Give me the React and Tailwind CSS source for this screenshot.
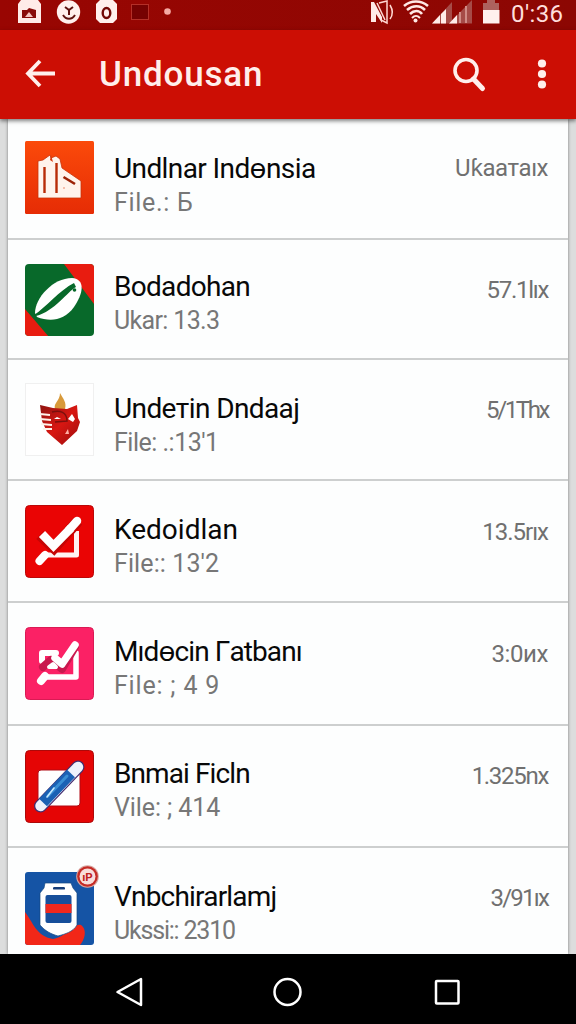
const BuildingIcon = () => (
    <svg viewBox="0 0 69 73" className="h-full w-full">
        <defs>
            <linearGradient id="orange" x1="0" y1="0" x2="0" y2="1">
                <stop offset="0" stopColor="#fb4a0a" />
                <stop offset="1" stopColor="#e62c05" />
            </linearGradient>
        </defs>
        <rect width="69" height="73" rx="1.5" fill="url(#orange)" />
        <path
            d="M13 57 V20 L18 19 L25 14 L26 17 L31 15 L35 18 L37 27 L56 40 V57 Z"
            fill="#fff3ec"
            stroke="#c93208"
            strokeWidth="0.8"
            strokeLinejoin="round"
        />
        <path d="M19.5 26 V52 M31.5 22 V52" stroke="#b82a06" strokeWidth="2.4" />
        <path d="M26 14 L28 21 L25 19 Z" fill="#d8370a" />
        <path d="M38.5 36 L50 43" stroke="#9c2206" strokeWidth="2.6" />
        <circle cx="39" cy="47" r="0.9" fill="#f2a58c" />
    </svg>
);

const LeafIcon = () => (
    <svg viewBox="0 0 69 73" className="h-full w-full">
        <defs>
            <clipPath id="leafClip">
                <rect width="69" height="72" rx="4" />
            </clipPath>
        </defs>
        <g clipPath="url(#leafClip)">
            <rect width="69" height="73" fill="#08692a" />
            <path d="M39 0 H69 V40 Z" fill="#e81c10" />
            <path d="M0 45 L24 73 H0 Z" fill="#e81c10" />
            <path
                d="M10 49 C10 34 28 14 47 14 C61 15 58 30 49 43 C39 57 25 58 12 53 Z"
                fill="#fff"
            />
            <path d="M9 51 C20 44 35 26 49 19 L51 23 C42 28 30 47 11 52 Z" fill="#08692a" />
            <circle cx="49.5" cy="26" r="1.8" fill="#08692a" />
        </g>
    </svg>
);

const HeartIcon = () => (
    <svg viewBox="0 0 69 73" className="h-full w-full">
        <defs>
            <linearGradient id="heart" x1="0" y1="0" x2="1" y2="1">
                <stop offset="0" stopColor="#8f1410" />
                <stop offset="0.5" stopColor="#d81712" />
                <stop offset="1" stopColor="#9b0d0d" />
            </linearGradient>
        </defs>
        <rect x="0.5" y="0.5" width="68" height="72" fill="#fff" stroke="#f0f0f0" />
        <path d="M35 10 C38 16 42 19 40 26 H30 C28 20 35 18 35 10 Z" fill="#d89a3b" />
        <path
            d="M15 22 L28 25 L42 26 L52 22 L53 35 L55 39 L52 48 L37 62 L22 49 L17 38 Z"
            fill="url(#heart)"
        />
        <path
            d="M15 31 L25 32 M15 36 L26 37 M16 41 L27 42 M18 46 L27 46"
            stroke="#fff2ea"
            strokeWidth="1.9"
        />
        <path d="M29 36 L32 34 L36 36 H29 Z" fill="#fff" />
        <path d="M43 36 L47 31 L50 36 L48 39 Z" fill="#fff" />
        <path d="M27 29 C35 27 42 29 42 38 L30 39" stroke="#7b100d" strokeWidth="1.5" fill="none" />
        <path d="M40 51 L43 46 L44 51 Z" fill="#ffb0a6" />
    </svg>
);

const CheckIcon = () => (
    <svg viewBox="0 0 69 73" className="h-full w-full">
        <rect x="0.5" y="0.5" width="68" height="72" rx="4" fill="#ea0404" stroke="#bb0808" />
        <g fill="none" stroke="#fff" strokeLinejoin="round">
            <path d="M15 55 L20 50 H51.5 V26" stroke="#fff3f3" strokeWidth="5" />
            <path d="M14.5 56 L20 50" strokeWidth="8" strokeLinecap="round" />
            <path
                d="M15 30 L29 43 L53 16"
                stroke="#c60505"
                strokeWidth="11"
                strokeLinejoin="miter"
            />
            <path d="M17 29 L28.5 41 L46 23" strokeWidth="8.5" strokeLinejoin="miter" />
            <path d="M44 25 L52 16" strokeWidth="8.5" strokeLinecap="round" />
        </g>
    </svg>
);

const ChartIcon = () => (
    <svg viewBox="0 0 69 73" className="h-full w-full">
        <rect x="0.5" y="0.5" width="68" height="72" rx="4" fill="#fb2165" stroke="#d91b54" />
        <g fill="none" stroke="#fff" strokeLinejoin="round" strokeLinecap="round">
            <path d="M16 54 L21 50 H51 V26" strokeWidth="5.5" />
            <path d="M16 54 L20 49" strokeWidth="8" />
            <path d="M17 34 V26 H31" strokeWidth="6" />
            <path d="M18 40 L26 33 L37 42 L50 20" stroke="#c9184e" strokeWidth="8" />
            <path d="M30 31 L37 37 L50 18" strokeWidth="7.5" />
            <path d="M24 40 L28 37 L31 40 Z" strokeWidth="4" fill="#fff" />
        </g>
    </svg>
);

const PencilIcon = () => (
    <svg viewBox="0 0 69 73" className="h-full w-full">
        <rect x="0.5" y="0.5" width="68" height="72" rx="4" fill="#e50505" stroke="#ad0909" />
        <rect x="13" y="20" width="42" height="36" rx="3" fill="#fff" stroke="#b20b14" />
        <g fill="none" strokeLinecap="round">
            <path d="M15.5 56 L53 17" stroke="#432e70" strokeWidth="13" />
            <path d="M15.5 56 L53 17" stroke="#eef2fc" strokeWidth="10.5" />
            <path d="M18 52.5 L46 23.5" stroke="#1b61b4" strokeWidth="11" strokeLinecap="butt" />
            <path d="M23 46 L42 26" stroke="#3a8ed4" strokeWidth="3" />
            <path d="M22 47 L29 38" stroke="#c8eaff" strokeWidth="1.6" />
        </g>
    </svg>
);

const PhoneIcon = () => (
    <svg viewBox="0 0 69 73" className="h-full w-full overflow-visible">
        <defs>
            <clipPath id="phoneClip">
                <rect width="69" height="73" rx="3" />
            </clipPath>
        </defs>
        <g clipPath="url(#phoneClip)">
            <rect width="69" height="73" fill="#1554a5" />
            <path
                d="M0 40 C8 50 11 64 28 67 C42 65 47 51 56 53 C63 58 59 69 55 73 H0 Z"
                fill="#f22718"
            />
        </g>
        <path
            d="M20 11 H46 L48 16 L52 21 V53 C48 60 40 62 33 64 C26 62 20 59 15 53 V21 L19 16 Z"
            fill="#fff"
            stroke="#164781"
            strokeWidth="0.7"
        />
        <rect x="28" y="15" width="12" height="2.6" rx="1.2" fill="#143c78" />
        <rect x="20.5" y="23" width="26" height="28" rx="2" fill="#174f9b" />
        <path d="M20.5 32 H46.5 V41 H20.5 Z" fill="#f0281d" />
        <circle cx="62.5" cy="4.5" r="11.3" fill="#d9a7a2" />
        <circle cx="62.5" cy="4.5" r="10.3" fill="#c52b25" />
        <circle cx="62.5" cy="4.5" r="8" fill="#f8dedb" />
        <text
            x="62.5"
            y="8.5"
            textAnchor="middle"
            fontSize="11.5"
            fontWeight="700"
            fontFamily="Roboto, sans-serif"
            fill="#c1211d"
        >
            ıP
        </text>
    </svg>
);

const items = [
    {
        icon: BuildingIcon,
        name: "Undlnar Indɵnsia",
        detail: "File.: Б",
        size: "Uƙaaтaıx",
        row: "h-[120px] pt-[21px]",
        text: "mt-[11px]",
        right: "mt-[10px]",
        nameGap: "tracking-[-0.6px]",
        detailGap: "tracking-[0.7px]",
        sizeGap: "tracking-[-0.5px]",
    },
    {
        icon: LeafIcon,
        name: "Bodadohan",
        detail: "Ukar: 13.3",
        size: "57.1lıx",
        row: "h-[120px] pt-[24px]",
        text: "mt-[6px]",
        right: "mt-[9px]",
        nameGap: "tracking-[-0.7px]",
        detailGap: "tracking-[-0.65px]",
        sizeGap: "tracking-[-1.3px]",
    },
    {
        icon: HeartIcon,
        name: "Undeтin Dndaaj",
        detail: "File: .:13'1",
        size: "5/1Thx",
        row: "h-[121px] pt-[23px]",
        text: "mt-[9px]",
        right: "mt-[10px]",
        nameGap: "tracking-[-0.6px]",
        detailGap: "tracking-[-0.5px]",
        sizeGap: "tracking-[-2.4px]",
    },
    {
        icon: CheckIcon,
        name: "Kedoidlan",
        detail: "File:: 13'2",
        size: "13.5rıx",
        row: "h-[122px] pt-[24px]",
        text: "mt-[8px]",
        right: "mt-[10px]",
        nameGap: "tracking-[0px]",
        detailGap: "tracking-[0.1px]",
        sizeGap: "tracking-[-1px]",
    },
    {
        icon: ChartIcon,
        name: "Mıdɵcin Γatbanı",
        detail: "File: ; 4 9",
        size: "3:0иx",
        row: "h-[123px] pt-[24px]",
        text: "mt-[8px]",
        right: "mt-[10px]",
        nameGap: "tracking-[-0.9px]",
        detailGap: "tracking-[0.8px]",
        sizeGap: "tracking-[-0.4px]",
    },
    {
        icon: PencilIcon,
        name: "Bnmai Ficln",
        detail: "Vile: ; 414",
        size: "1.325nx",
        row: "h-[122px] pt-[24px]",
        text: "mt-[7px]",
        right: "mt-[9px]",
        nameGap: "tracking-[-0.9px]",
        detailGap: "tracking-[-0.1px]",
        sizeGap: "tracking-[-1.3px]",
    },
    {
        icon: PhoneIcon,
        name: "Vnbchirarlamj",
        detail: "Ukssi:: 2310",
        size: "3/91ıx",
        row: "h-[106px] pt-[24px]",
        text: "mt-[8px]",
        right: "mt-[9px]",
        nameGap: "tracking-[-0.8px]",
        detailGap: "tracking-[-1.2px]",
        sizeGap: "tracking-[-1.8px]",
    },
];

const StatusBar = () => (
    <div className="flex h-[30px] items-start justify-between bg-gradient-to-r from-[#990602] to-[#8c0703]">
        <svg width="200" height="30" viewBox="0 0 200 30">
            <path d="M21 0 H38 L41 4 V23 H18 V4 Z" fill="#ffebe8" />
            <path d="M22 10 H27 L29 8 L36 10 V18 H22 Z" fill="#890b09" />
            <path d="M25 17 L29 12 L33 17 Z" fill="#f5c2bd" />
            <circle cx="68.5" cy="12" r="11.7" fill="#fff0ed" />
            <path
                d="M65 7 L69 10 L73 7 M69 10 V15 M63 15 C66 20 72 20 75 15"
                stroke="#5d110e"
                strokeWidth="2"
                fill="none"
            />
            <path d="M100 0 H113 L117 4 V19 L113 23 H100 L96 19 V4 Z" fill="#fff0ed" />
            <ellipse cx="106.5" cy="13" rx="3.8" ry="5" fill="none" stroke="#720906" strokeWidth="2.4" />
            <rect x="131.5" y="4.5" width="17" height="15" fill="#760202" stroke="#b43028" />
            <circle cx="167.5" cy="11.5" r="3.3" fill="#f5aaa4" />
        </svg>
        <div className="flex">
            <svg width="142" height="30" viewBox="368 0 142 30">
                <path d="M371 2 L374 2 L382 17 V23 L376 14 V22 H371 Z" fill="#ffe9e6" />
                <path
                    d="M377 3 L385 20 M379 3 L387 1 V23 L381 20 M390 5 C393 10 393 15 390 19"
                    stroke="#ffd7d2"
                    strokeWidth="1.5"
                    fill="none"
                />
                <g fill="none" stroke="#ffe9e5" strokeWidth="2.6">
                    <path d="M404 6 C411 0 421 0 428 6" />
                    <path d="M407 10 C413 5 420 5 425 10" />
                    <path d="M410 14 C414 10 419 10 422 14" />
                    <path d="M412 18 C415 15 417 15 420 18" strokeWidth="2" />
                </g>
                <circle cx="415.5" cy="20.5" r="2" fill="#ffe9e5" />
                <path d="M432 23.5 L452 2 V23.5 Z" fill="#a64b47" />
                <path d="M432 23.5 L440 15 V23.5 Z M441 14 L446 9 V23.5 H441 Z" fill="#ffebe8" />
                <path d="M449 23.5 L472 0 V23.5 Z" fill="#a64b47" />
                <path d="M449 23.5 L457 15 V23.5 Z" fill="#ffebe8" />
                <path d="M460 12 V23 M466 6 V23" stroke="#d08b86" strokeWidth="2" />
                <path d="M483 3 H487 V0 H495 V3 H499 V11 H483 Z" fill="#ad625e" />
                <rect x="483" y="10" width="16.5" height="13.5" fill="#fff1ee" />
            </svg>
            <span className="w-[66px] pl-px text-[24px] leading-[28px] tracking-[0.4px] text-[#ffdedb]">
                0':36
            </span>
        </div>
    </div>
);

const Header = () => (
    <div className="relative z-10 flex h-[89px] items-center bg-[#cc0e04] pl-[24px] shadow-[0_2px_4px_rgba(0,0,0,0.5)]">
        <svg width="34" height="34" viewBox="0 0 34 34" fill="none" stroke="#ffefec">
            <path d="M31 15.5 H5 M16 3 L4 15.5 L16 28" strokeWidth="3.8" strokeLinecap="butt" />
        </svg>
        <h1 className="ml-[41px] flex-1 text-[35px] font-medium leading-[42px] tracking-[0.8px] text-[#ffefec]">
            Undousan
        </h1>
        <svg width="36" height="36" viewBox="0 0 36 36" fill="none" stroke="#ffefec">
            <circle cx="15" cy="13.5" r="11" strokeWidth="3.6" />
            <path d="M22.5 22 L31.5 31.5" strokeWidth="5" strokeLinecap="round" />
        </svg>
        <svg width="12" height="36" viewBox="0 0 12 36" className="ml-[49px] mr-[28px]" fill="#ffefec">
            <circle cx="6" cy="6.5" r="4.1" />
            <circle cx="6" cy="17" r="4.1" />
            <circle cx="6" cy="27.5" r="4.1" />
        </svg>
    </div>
);

const FileRow = ({ item }) => {
    const Icon = item.icon;

    return (
        <li
            className={`flex items-start border-b-2 border-[#cdcfcf] pl-[17px] pr-[20px] last:border-b-0 ${item.row}`}
        >
            <div className="h-[73px] w-[69px] shrink-0">
                <Icon />
            </div>
            <div className={`ml-[20px] flex-1 whitespace-pre ${item.text}`}>
                <p className={`text-[28px] leading-[34px] text-[#080808] ${item.nameGap}`}>
                    {item.name}
                </p>
                <p className={`text-[25px] leading-[34px] text-[#777] ${item.detailGap}`}>
                    {item.detail}
                </p>
            </div>
            <span
                className={`whitespace-pre text-[24px] leading-[34px] text-[#707070] ${item.right} ${item.sizeGap}`}
            >
                {item.size}
            </span>
        </li>
    );
};

const NavBar = () => (
    <div className="flex h-[70px] items-center justify-between bg-black pl-[113px] pr-[113px] pt-[7px]">
        <svg width="32" height="32" viewBox="0 0 32 32" fill="none" stroke="#fff" strokeWidth="2.5">
            <path d="M28 2 V28 L4.5 15 Z" strokeLinejoin="round" />
        </svg>
        <svg width="32" height="32" viewBox="0 0 32 32" fill="none" stroke="#fff" strokeWidth="2.5">
            <circle cx="15.5" cy="15" r="13" />
        </svg>
        <svg width="32" height="32" viewBox="0 0 32 32" fill="none" stroke="#fff" strokeWidth="2.5">
            <rect x="5" y="4" width="22.5" height="22.5" rx="0.8" />
        </svg>
    </div>
);

const App = () => {
    return (
        <div className="flex h-[1024px] w-[576px] flex-col overflow-hidden bg-[#dcdddd] font-['Roboto','Noto_Sans',sans-serif]">
            <StatusBar />
            <Header />
            <ul className="mx-[8px] h-[835px] bg-[#fdfefe] pt-px shadow-[0_0_3px_rgba(0,0,0,0.45)]">
                {items.map((item) => (
                    <FileRow key={item.name} item={item} />
                ))}
            </ul>
            <NavBar />
        </div>
    );
};

export default App;
